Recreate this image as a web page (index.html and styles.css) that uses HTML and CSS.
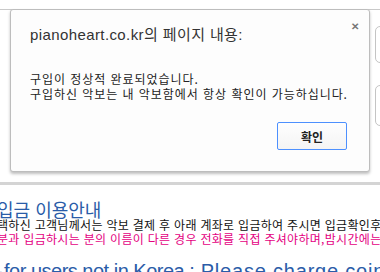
FILE: index.html
```html
<!DOCTYPE html>
<html lang="ko">
<head>
<meta charset="utf-8">
<link rel="stylesheet" href="styles.css">
</head>
<body>
<div class="page">
  <div class="top-bar"></div>
  <div class="header">
    <div class="side-box side-box-a"></div>
    <div class="side-box side-box-b"></div>
  </div>
  <div class="band"></div>
  <div class="content">
    <h2 class="heading">입금 이용안내</h2>
    <p class="line">택하신 고객님께서는 악보 결제 후 아래 계좌로 입금하여 주시면 입금확인후 자동으로 처리됩니다.</p>
    <p class="line pink">분과 입금하시는 분의 이름이 다른 경우 전화를 직접 주셔야하며,밤시간에는 게시판에 남겨주세요.</p>
    <p class="foreign"><span class="dot">·</span><span class="tight">for users not in Korea :</span><span class="loose"> Please charge coin</span></p>
  </div>
</div>
<div class="dialog">
  <div class="dialog-head">
    <span class="dialog-title">pianoheart.co.kr의 페이지 내용:</span>
    <span class="dialog-close">&#x2715;</span>
  </div>
  <div class="dialog-msg">
    <div>구입이 정상적 완료되었습니다.</div>
    <div>구입하신 악보는 내 악보함에서 항상 확인이 가능하십니다.</div>
  </div>
  <div class="dialog-actions">
    <button class="ok-btn">확인</button>
  </div>
</div>
</body>
</html>
```

FILE: styles.css
```css
html, body {
  margin: 0;
  padding: 0;
  background: #ffffff;
}
body {
  width: 380px;
  height: 272px;
  overflow: hidden;
  position: relative;
  font-family: "Liberation Sans", "Noto Sans CJK KR", sans-serif;
}
.page {
  width: 380px;
}
.top-bar {
  height: 9px;
  border-bottom: 1px solid #c9c9c9;
}
.header {
  height: 172px;
  display: flex;
  flex-direction: column;
  align-items: flex-end;
  padding-top: 16px;
  box-sizing: border-box;
  gap: 22px;
  overflow: hidden;
}
.side-box {
  width: 20px;
  margin-right: -15px;
  border: 1px solid #c4c4c4;
  border-radius: 5px;
  box-sizing: border-box;
}
.side-box-a { height: 37px; }
.side-box-b { height: 41px; }
.band {
  height: 3px;
  background: #d4d4d4;
}
.content {
  margin-left: -3px;
  padding-top: 15px;
  white-space: nowrap;
}
.heading {
  margin: 0;
  font-family: "Noto Sans CJK KR", sans-serif;
  font-size: 18px;
  font-weight: normal;
  line-height: 18px;
  color: #2a5ca8;
}
.line {
  margin: 0;
  font-family: "Noto Sans CJK KR", sans-serif;
  font-size: 12px;
  line-height: 14px;
  color: #111;
  letter-spacing: 0.3px;
}
.pink {
  color: #e4007f;
}
.foreign {
  margin: 13px 0 0 0;
  font-family: "Liberation Sans", "Noto Sans CJK KR", sans-serif;
  font-size: 20px;
  line-height: 24px;
  color: #2a5ca8;
}
.tight {
  letter-spacing: -0.5px;
}
.loose {
  letter-spacing: 0.8px;
}
.dot {
  display: inline-block;
  width: 7px;
  text-align: center;
}
.dialog {
  position: absolute;
  left: 10px;
  top: 9px;
  width: 360px;
  height: 163px;
  box-sizing: border-box;
  background: #fdfdfd;
  border: 1px solid #bdbdbd;
  border-radius: 3px;
  box-shadow: 0 2px 3px rgba(0,0,0,0.25);
  padding: 15px 10px 0 19px;
  display: flex;
  flex-direction: column;
}
.dialog-head {
  display: flex;
  justify-content: space-between;
  align-items: flex-start;
}
.dialog-title {
  font-size: 15px;
  line-height: 20px;
  color: #333;
  letter-spacing: 0.4px;
}
.dialog-close {
  font-size: 10px;
  font-weight: bold;
  color: #777;
  line-height: 10px;
  margin-top: -3px;
}
.dialog-msg {
  margin-top: 26px;
  font-family: "Noto Sans CJK KR", sans-serif;
  font-size: 12px;
  line-height: 15px;
  color: #222;
  letter-spacing: 0.95px;
}
.dialog-actions {
  display: flex;
  justify-content: flex-end;
  margin-top: 21px;
  padding-right: 12px;
}
.ok-btn {
  width: 70px;
  height: 28px;
  border: 1px solid #4d90fe;
  border-radius: 2px;
  background: linear-gradient(#fefefe, #f4f4f4);
  font-family: "Noto Sans CJK KR", sans-serif;
  font-size: 12px;
  font-weight: bold;
  color: #222;
  padding: 0;
}
```
